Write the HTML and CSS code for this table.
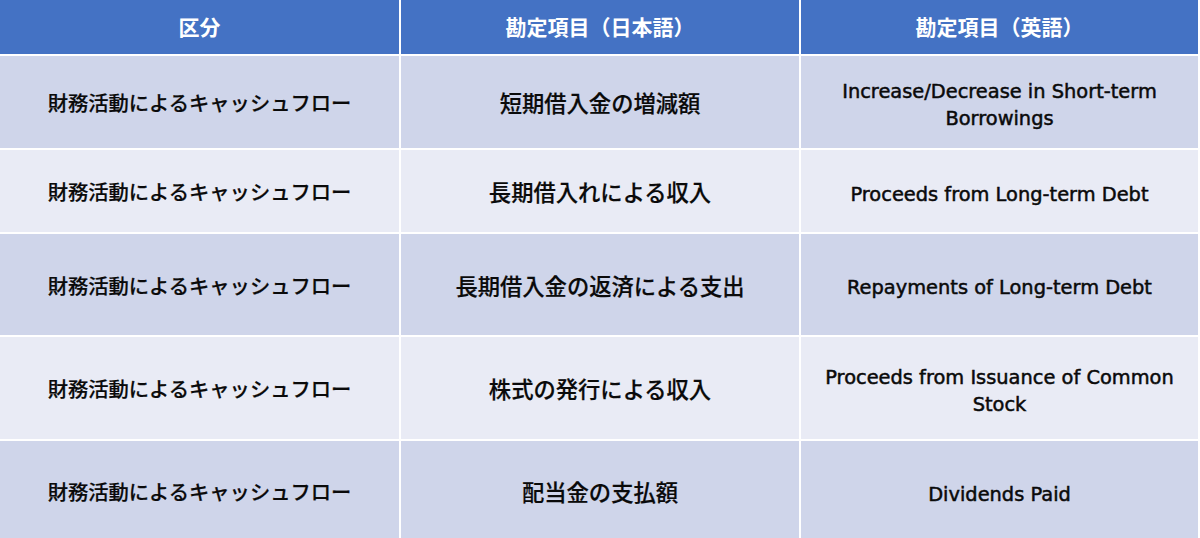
FILE: index.html
```html
<!DOCTYPE html>
<html lang="ja">
<head>
<meta charset="utf-8">
<link rel="stylesheet" href="styles.css">
</head>
<body>
<table class="cf-table">
  <colgroup>
    <col class="c1"><col class="c2"><col class="c3">
  </colgroup>
  <thead>
    <tr class="head">
      <th>区分</th>
      <th>勘定項目（日本語）</th>
      <th>勘定項目（英語）</th>
    </tr>
  </thead>
  <tbody>
    <tr class="odd r1">
      <td class="ja1">財務活動によるキャッシュフロー</td>
      <td class="ja2">短期借入金の増減額</td>
      <td class="en">Increase/Decrease in Short-term<br>Borrowings</td>
    </tr>
    <tr class="even r2">
      <td class="ja1">財務活動によるキャッシュフロー</td>
      <td class="ja2">長期借入れによる収入</td>
      <td class="en">Proceeds from Long-term Debt</td>
    </tr>
    <tr class="odd r3">
      <td class="ja1">財務活動によるキャッシュフロー</td>
      <td class="ja2">長期借入金の返済による支出</td>
      <td class="en">Repayments of Long-term Debt</td>
    </tr>
    <tr class="even r4">
      <td class="ja1">財務活動によるキャッシュフロー</td>
      <td class="ja2">株式の発行による収入</td>
      <td class="en">Proceeds from Issuance of Common<br>Stock</td>
    </tr>
    <tr class="odd r5">
      <td class="ja1">財務活動によるキャッシュフロー</td>
      <td class="ja2">配当金の支払額</td>
      <td class="en">Dividends Paid</td>
    </tr>
  </tbody>
</table>
</body>
</html>
```

FILE: styles.css
```css
html, body {
  margin: 0;
  padding: 0;
  background: #ffffff;
}
body {
  width: 1200px;
  height: 538px;
  overflow: hidden;
  font-family: "Noto Sans CJK JP", "Noto Sans", sans-serif;
}
.cf-table {
  border-collapse: collapse;
  table-layout: fixed;
  width: 1199px;
  margin-top: -1px;
}
.c1 { width: 400px; }
.c2 { width: 400px; }
.c3 { width: 399px; }
.cf-table th,
.cf-table td {
  border: 2px solid #ffffff;
  text-align: center;
  vertical-align: middle;
  padding: 3px 10px;
  color: #0a0a0a;
  font-size: 20px;
  font-weight: 500;
  line-height: 26px;
}
.cf-table tr > :first-child { border-left: none; }
.cf-table .head th {
  background: #4472c4;
  color: #ffffff;
  font-size: 21px;
  font-weight: 700;
  height: 53px;
  padding: 0 10px 2px;
  border-top: none;
}
.odd td { background: #cfd5ea; }
.even td { background: #e9ebf5; }
.r1 td { height: 86px; }
.r2 td { height: 76px; }
.r3 td { height: 95px; }
.r4 td { height: 96px; }
.r5 td { height: 94px; }
.cf-table td.ja1 {
  font-size: 20.3px;
  -webkit-text-stroke: 0.2px #0a0a0a;
}
.cf-table td.ja2 {
  font-size: 22.3px;
  -webkit-text-stroke: 0.2px #0a0a0a;
}
.cf-table td.en {
  font-family: "DejaVu Sans", "Noto Sans", sans-serif;
  font-size: 19.4px;
  font-weight: 400;
  -webkit-text-stroke: 0.5px #0a0a0a;
  line-height: 27px;
  padding: 6px 10px 0;
}
```
